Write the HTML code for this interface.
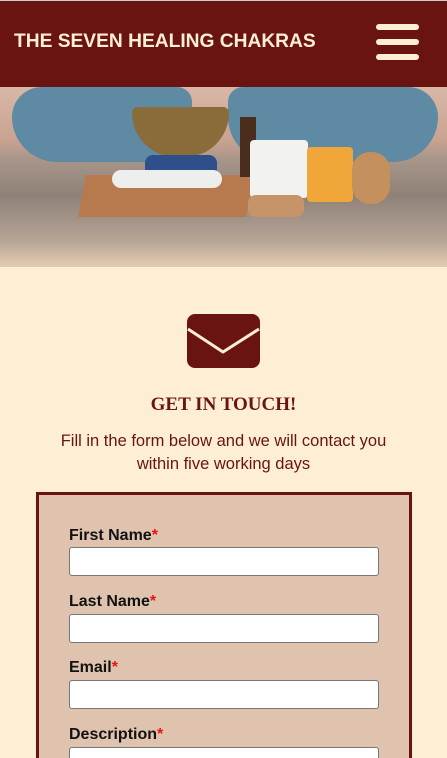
<!DOCTYPE html>
<html><head><meta charset="utf-8"><style>
*{margin:0;padding:0;box-sizing:border-box}
html,body{width:447px;height:758px;overflow:hidden}
body{background:#feeed4;font-family:"Liberation Sans",sans-serif;position:relative}
.hdr{position:absolute;top:0;left:0;width:447px;height:87px;background:#6a1412;border-top:1px solid #c9cdd2}
.hdr h1{position:absolute;left:14px;top:30px;color:#feeed4;font-size:19.2px;font-weight:bold;letter-spacing:0}
.bar{position:absolute;left:376px;width:43px;height:6px;border-radius:3px;background:#feeed4}
.img{position:absolute;top:87px;left:0;width:447px;height:180px;overflow:hidden;background:linear-gradient(#d9b7a6 0%,#c9a291 30%,#a8968a 40%,#8f8178 60%,#b5a394 85%,#e3ccb0 100%)}
.img div{position:absolute}
h2{position:absolute;top:394px;width:447px;text-align:center;font-family:"Liberation Serif",serif;font-weight:bold;font-size:19px;color:#6a1412}
.p{position:absolute;top:430px;width:447px;text-align:center;font-size:16.5px;line-height:23px;color:#6a1412}
.form{position:absolute;left:36px;top:492px;width:376px;height:300px;background:#e0c3ae;border:3px solid #6a1412}
label{position:absolute;left:30px;font-size:16px;font-weight:bold;color:#111}
label span{color:#e11}
.in{position:absolute;left:30px;width:310px;height:29px;background:#fff;border:1px solid #777;border-radius:3px}
</style></head><body>
<div class="hdr"><h1>THE SEVEN HEALING CHAKRAS</h1>
<div class="bar" style="top:23px"></div><div class="bar" style="top:38px"></div><div class="bar" style="top:53px"></div></div>
<div class="img">
<div style="left:12px;top:0;width:180px;height:75px;background:#5f8aa3;border-radius:40px 20px 60px 60px"></div>
<div style="left:228px;top:0;width:210px;height:75px;background:#5f8aa3;border-radius:20px 40px 60px 60px"></div>
<div style="left:132px;top:20px;width:97px;height:50px;background:#8a6c3a;border-radius:6px 6px 45px 45px"></div>
<div style="left:145px;top:68px;width:72px;height:22px;background:#2f4f8a;border-radius:8px"></div>
<div style="left:82px;top:88px;width:168px;height:42px;background:#b77a4f;transform:skewX(-10deg)"></div>
<div style="left:112px;top:83px;width:110px;height:18px;background:#eee;border-radius:9px"></div>
<div style="left:240px;top:30px;width:16px;height:60px;background:#4a2d1d"></div>
<div style="left:250px;top:53px;width:58px;height:58px;background:#f2f2f0;border-radius:4px"></div>
<div style="left:248px;top:108px;width:56px;height:22px;background:#c69468;border-radius:8px"></div>
<div style="left:307px;top:60px;width:46px;height:55px;background:#f0a638;border-radius:4px"></div>
<div style="left:352px;top:65px;width:38px;height:52px;background:#c4915e;border-radius:18px"></div>
</div>
<svg style="position:absolute;left:187px;top:314px" width="73" height="54" viewBox="0 0 73 54"><rect width="73" height="54" rx="8" fill="#6a1412"/><path d="M1 15 L36 38 L72 15" stroke="#feeed4" stroke-width="3" fill="none" stroke-linejoin="round"/></svg>
<h2>GET IN TOUCH!</h2>
<div class="p">Fill in the form below and we will contact you<br>within five working days</div>
<div class="form">
<label style="top:32px">First Name<span>*</span></label><div class="in" style="top:52px"></div>
<label style="top:98px">Last Name<span>*</span></label><div class="in" style="top:119px"></div>
<label style="top:164px">Email<span>*</span></label><div class="in" style="top:185px"></div>
<label style="top:231px">Description<span>*</span></label><div class="in" style="top:252px"></div>
</div>
</body></html>
